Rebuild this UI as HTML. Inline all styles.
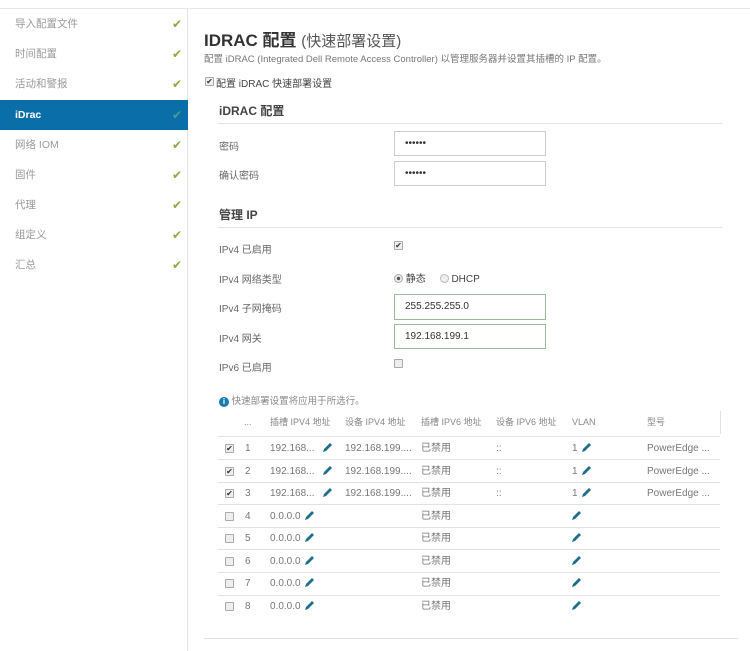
<!DOCTYPE html>
<html><head><meta charset="utf-8"><style>
*{margin:0;padding:0;box-sizing:border-box}
body{width:750px;height:651px;background:#fff;font-family:"Liberation Sans","Noto Sans CJK SC",sans-serif;color:#555;position:relative;overflow:hidden;font-size:10px}
.a{position:absolute;white-space:nowrap}
.side{left:0;top:9px;width:188px;height:642px;border-right:1px solid #e3e3e3}
.it{position:absolute;left:0;width:188px;height:30px;line-height:30px;padding-left:15px;color:#999;font-size:10.5px}
.it.on{background:#0a6fa8;color:#fff;font-weight:bold}
.ck{position:absolute;right:6px;top:0;color:#86ad3c;font-size:12px;font-weight:normal}
.on .ck{color:#4e9a9a}
.lbl{font-size:10px;color:#666}
.inp{position:absolute;left:394px;width:152px;height:26px;border:1px solid #ccc;padding-left:10px;line-height:24px;font-size:10px;color:#333}
.g{border-color:#9bb89a}
.cb{display:inline-block;width:9px;height:9px;border:1px solid #aaa;background:#eee;border-radius:1px;position:absolute;font-size:8px;line-height:7px;text-align:center;color:#333}
.hr{position:absolute;height:1px;background:#e2e2e2}
.row{position:absolute;left:218px;width:502px;height:23px;line-height:23px;color:#777;font-size:10px}
.row span{position:absolute}
.pen{position:absolute;width:11px;height:11px;top:5px}
</style></head><body>
<div class="hr" style="left:0;top:8px;width:750px;background:#e8e8e8"></div>
<div class="a side">
<div class="it" style="top:0">导入配置文件<span class="ck">✔</span></div>
<div class="it" style="top:30px">时间配置<span class="ck">✔</span></div>
<div class="it" style="top:60px">活动和警报<span class="ck">✔</span></div>
<div class="it on" style="top:91px">iDrac<span class="ck">✔</span></div>
<div class="it" style="top:121px">网络 IOM<span class="ck">✔</span></div>
<div class="it" style="top:151px">固件<span class="ck">✔</span></div>
<div class="it" style="top:181px">代理<span class="ck">✔</span></div>
<div class="it" style="top:211px">组定义<span class="ck">✔</span></div>
<div class="it" style="top:241px">汇总<span class="ck">✔</span></div>
</div>
<div class="a" style="left:204px;top:26px;font-size:17px;color:#333"><b>IDRAC 配置</b> <span style="font-size:15px;color:#555">(快速部署设置)</span></div>
<div class="a" style="left:204px;top:51px;font-size:9.5px;color:#777">配置 iDRAC (Integrated Dell Remote Access Controller) 以管理服务器并设置其插槽的 IP 配置。</div>
<span class="cb" style="left:205px;top:77px">✔</span>
<div class="a" style="left:216px;top:75px;font-size:10px;color:#444">配置 iDRAC 快速部署设置</div>
<div class="a" style="left:219px;top:102px;font-size:12px;color:#444;font-weight:bold">iDRAC 配置</div>
<div class="hr" style="left:218px;top:123px;width:504px"></div>
<div class="a lbl" style="left:219px;top:138px">密码</div>
<div class="inp" style="top:131px;height:25px">••••••</div>
<div class="a lbl" style="left:219px;top:167px">确认密码</div>
<div class="inp" style="top:161px;height:25px">••••••</div>
<div class="a" style="left:219px;top:206px;font-size:12px;color:#444;font-weight:bold">管理 IP</div>
<div class="hr" style="left:218px;top:227px;width:504px"></div>
<div class="a lbl" style="left:219px;top:241px">IPv4 已启用</div>
<span class="cb" style="left:394px;top:241px">✔</span>
<div class="a lbl" style="left:219px;top:271px">IPv4 网络类型</div>
<div class="a" style="left:394px;top:270px;font-size:10px;color:#444"><span style="display:inline-block;width:9px;height:9px;border:1px solid #aaa;border-radius:50%;background:radial-gradient(#555 30%,#eee 40%);vertical-align:-1px"></span> 静态 &nbsp;&nbsp;&nbsp; <span style="display:inline-block;width:9px;height:9px;border:1px solid #bbb;border-radius:50%;background:#eee;vertical-align:-1px"></span> DHCP</div>
<div class="a lbl" style="left:219px;top:300px">IPv4 子网掩码</div>
<div class="inp g" style="top:294px">255.255.255.0</div>
<div class="a lbl" style="left:219px;top:330px">IPv4 网关</div>
<div class="inp g" style="top:324px;height:25px">192.168.199.1</div>
<div class="a lbl" style="left:219px;top:359px">IPv6 已启用</div>
<span class="cb" style="left:394px;top:359px"></span>
<div class="a" style="left:219px;top:393px;font-size:9.5px;color:#888"><span style="display:inline-block;width:10px;height:10px;border-radius:50%;background:#1a7bb0;color:#fff;font-size:8px;line-height:10px;text-align:center;font-weight:bold">i</span> 快速部署设置将应用于所选行。</div>
<div class="row" style="top:411px;font-size:9px;color:#888"><span style="left:26px">...</span><span style="left:52px">插槽 IPV4 地址</span><span style="left:127px">设备 IPV4 地址</span><span style="left:203px">插槽 IPV6 地址</span><span style="left:278px">设备 IPV6 地址</span><span style="left:354px">VLAN</span><span style="left:429px">型号</span></div>
<div class="hr" style="left:720px;top:411px;width:1px;height:23px"></div>
<svg width="0" height="0" style="position:absolute"><defs><g id="p"><path d="M1 10 L2 7 L8 1 L10 3 L4 9 Z" fill="#1f6e8c"/></g></defs></svg>
<div class="hr" style="left:218px;top:436px;width:502px"></div>
<div class="row" style="top:437px"><span class="cb" style="left:7px;top:7px">✔</span><span style="left:27px">1</span><span style="left:52px">192.168...</span><svg class="pen" style="left:104px"><use href="#p"/></svg><span style="left:127px">192.168.199....</span><span style="left:203px">已禁用</span><span style="left:278px">::</span><span style="left:354px">1</span><svg class="pen" style="left:363px"><use href="#p"/></svg><span style="left:429px">PowerEdge ...</span></div>
<div class="hr" style="left:218px;top:459px;width:502px"></div>
<div class="row" style="top:460px"><span class="cb" style="left:7px;top:7px">✔</span><span style="left:27px">2</span><span style="left:52px">192.168...</span><svg class="pen" style="left:104px"><use href="#p"/></svg><span style="left:127px">192.168.199....</span><span style="left:203px">已禁用</span><span style="left:278px">::</span><span style="left:354px">1</span><svg class="pen" style="left:363px"><use href="#p"/></svg><span style="left:429px">PowerEdge ...</span></div>
<div class="hr" style="left:218px;top:482px;width:502px"></div>
<div class="row" style="top:482px"><span class="cb" style="left:7px;top:7px">✔</span><span style="left:27px">3</span><span style="left:52px">192.168...</span><svg class="pen" style="left:104px"><use href="#p"/></svg><span style="left:127px">192.168.199....</span><span style="left:203px">已禁用</span><span style="left:278px">::</span><span style="left:354px">1</span><svg class="pen" style="left:363px"><use href="#p"/></svg><span style="left:429px">PowerEdge ...</span></div>
<div class="hr" style="left:218px;top:504px;width:502px"></div>
<div class="row" style="top:505px"><span class="cb" style="left:7px;top:7px"></span><span style="left:27px">4</span><span style="left:52px">0.0.0.0</span><svg class="pen" style="left:86px"><use href="#p"/></svg><span style="left:203px">已禁用</span><svg class="pen" style="left:353px"><use href="#p"/></svg></div>
<div class="hr" style="left:218px;top:527px;width:502px"></div>
<div class="row" style="top:527px"><span class="cb" style="left:7px;top:7px"></span><span style="left:27px">5</span><span style="left:52px">0.0.0.0</span><svg class="pen" style="left:86px"><use href="#p"/></svg><span style="left:203px">已禁用</span><svg class="pen" style="left:353px"><use href="#p"/></svg></div>
<div class="hr" style="left:218px;top:549px;width:502px"></div>
<div class="row" style="top:550px"><span class="cb" style="left:7px;top:7px"></span><span style="left:27px">6</span><span style="left:52px">0.0.0.0</span><svg class="pen" style="left:86px"><use href="#p"/></svg><span style="left:203px">已禁用</span><svg class="pen" style="left:353px"><use href="#p"/></svg></div>
<div class="hr" style="left:218px;top:572px;width:502px"></div>
<div class="row" style="top:572px"><span class="cb" style="left:7px;top:7px"></span><span style="left:27px">7</span><span style="left:52px">0.0.0.0</span><svg class="pen" style="left:86px"><use href="#p"/></svg><span style="left:203px">已禁用</span><svg class="pen" style="left:353px"><use href="#p"/></svg></div>
<div class="hr" style="left:218px;top:595px;width:502px"></div>
<div class="row" style="top:595px"><span class="cb" style="left:7px;top:7px"></span><span style="left:27px">8</span><span style="left:52px">0.0.0.0</span><svg class="pen" style="left:86px"><use href="#p"/></svg><span style="left:203px">已禁用</span><svg class="pen" style="left:353px"><use href="#p"/></svg></div>
<div class="hr" style="left:204px;top:638px;width:534px"></div>
</body></html>
